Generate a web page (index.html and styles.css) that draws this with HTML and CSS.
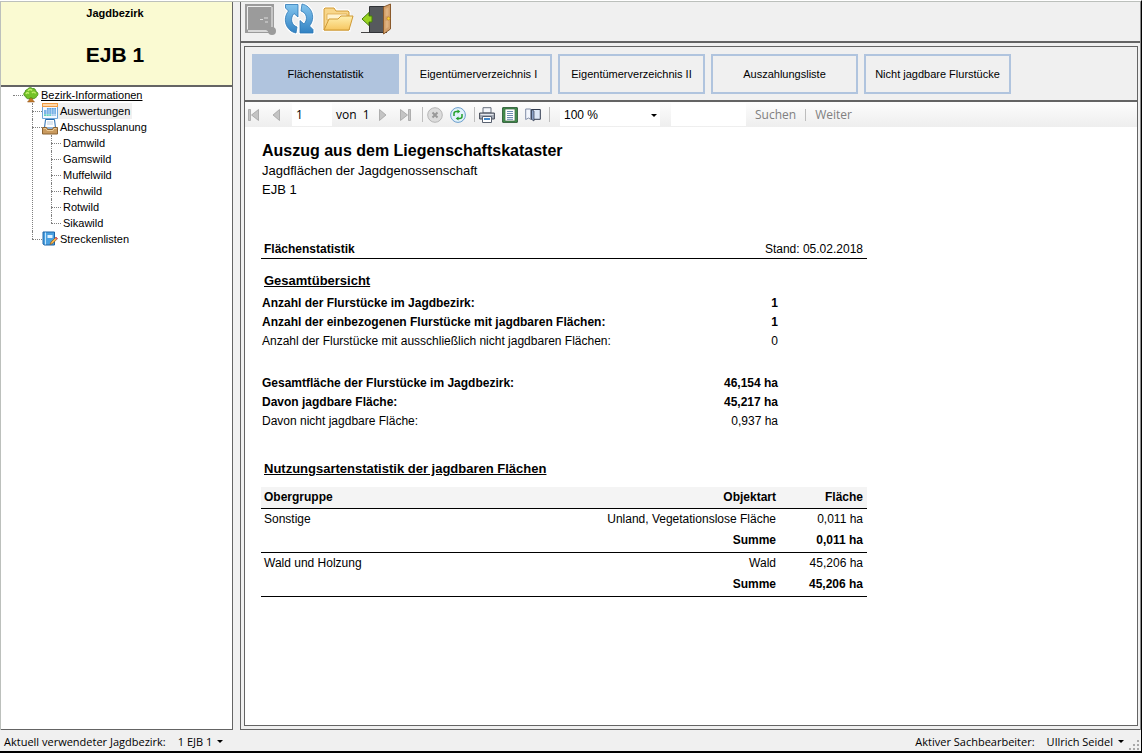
FILE: index.html
```html
<!DOCTYPE html>
<html lang="de">
<head>
<meta charset="utf-8">
<title>Jagdbezirk EJB 1</title>
<link rel="stylesheet" href="styles.css">
</head>
<body>
<div class="app">
  <div class="workspace">
    <aside class="sidebar">
      <header class="district">
        <p class="district-label">Jagdbezirk</p>
        <h1 class="district-name">EJB 1</h1>
      </header>
      <nav class="tree">
        <ul class="level level-root">
          <li class="node">
            <a class="row" href="#"><svg class="ico" viewBox="0 0 16 16"><path d="M6.500 9h3l.3 4 1.700 2h-7L6.200 13z" fill="#c47a26" stroke="#8a4a10" stroke-width=".5"/><path d="M4.500 2.500C5 .5 8 0 9.500 1.500 12 1 13 3 12.800 4.500 15.500 5 15.500 8.500 13.500 9.500 12.500 12 9.500 12 8 10.500 6 12.500 3 12 2.800 9.500.2 9 .2 5.500 2.300 5 2 3.500 3 2.500 4.500 2.500z" fill="#74c22a" stroke="#3d8510" stroke-width=".8"/><path d="M5 4c1-2 3-2 4-.5M3 7c.5-1.500 2-1.500 3-.5M9 6c1-1.500 3-1 3.500.5" fill="none" stroke="#c2ee6c" stroke-width="1.400"/></svg><span class="name root-name">Bezirk-Informationen</span></a>
            <ul class="level level-one">
              <li class="node"><a class="row" href="#" aria-current="page"><svg class="ico" viewBox="0 0 16 16"><path d="M.5 1.500h15v14H.5z" fill="#f5f9ff" stroke="#70a5d9"/><path d="M0 0h16v4H0z" fill="#f09a42"/><path d="M1 1h14v2H1z" fill="#ffd8aa"/><path d="M5 5h9v2H5zM2 7h12v4H2z" fill="#5a9fdf"/><path d="M2 11h7v2H2z" fill="#64d0bd"/><path d="M9 11h5v2H9z" fill="#a5c9ec"/><path d="M2 7h12M2 9h12M2 11h12M4.500 5v8M7 5v8M9.500 5v8M12 5v8" stroke="#e3effb" stroke-width=".5"/></svg><span class="name selected">Auswertungen</span></a></li>
              <li class="node"><a class="row" href="#"><svg class="ico" viewBox="0 0 16 16"><path d="M3.500.5h9l1 8.500h-11z" fill="#fff" stroke="#2469ae"/><path d="M5 3h6M5 5h6" stroke="#b9cde2"/><path d="M.5 8.500h4l1 2h5l1-2h4v6.500H.5z" fill="#c99a5e" stroke="#8a6232"/><path d="M1.500 9.500h2.500l1 2h6l1-2h2.500" fill="none" stroke="#ecca96"/></svg><span class="name">Abschussplanung</span></a>
                <ul class="level level-two">
                  <li class="node"><a class="row" href="#"><span class="name">Damwild</span></a></li>
                  <li class="node"><a class="row" href="#"><span class="name">Gamswild</span></a></li>
                  <li class="node"><a class="row" href="#"><span class="name">Muffelwild</span></a></li>
                  <li class="node"><a class="row" href="#"><span class="name">Rehwild</span></a></li>
                  <li class="node"><a class="row" href="#"><span class="name">Rotwild</span></a></li>
                  <li class="node"><a class="row" href="#"><span class="name">Sikawild</span></a></li>
                </ul>
              </li>
              <li class="node"><a class="row" href="#"><svg class="ico" viewBox="0 0 16 16"><path d="M1 1h11.500v13H2.500L1 13z" fill="#4aa0e0" stroke="#1c64a8"/><path d="M3.500 1.500v12" stroke="#c5e5fb"/><path d="M5.500 4h5v3h-5z" fill="#dff1ff"/><path d="M8 13.500l1-2.500 5-5 1.600 1.600-5 5z" fill="#f3b44d" stroke="#8b5a1e" stroke-width=".7"/><path d="M13 7l1-1 1.600 1.600-1 1z" fill="#e0527a"/></svg><span class="name">Streckenlisten</span></a></li>
            </ul>
          </li>
        </ul>
      </nav>
    </aside>

    <main class="main">
      <div class="toolbar">
        <button class="tool" type="button" aria-label="Vorschau" disabled><svg viewBox="0 0 32 32"><path d="M1 1h29v29H1z" fill="#9b9b9b"/><path d="M3.500 26.500v-23h24" fill="none" stroke="#eee"/><path d="M4 28h22" stroke="#eee" stroke-width="1.500"/><path d="M28 4v20" stroke="#eee"/><path d="M16 16.500h3M20 15h4M21 19h3" stroke="#ddd"/><circle cx="28" cy="28" r="4" fill="#9b9b9b"/><path d="M22 25l4 3" stroke="#9b9b9b" stroke-width="3"/></svg></button>
        <button class="tool" type="button" aria-label="Aktualisieren"><svg viewBox="0 0 32 32"><defs><linearGradient id="blue" x1="0" y1="0" x2="0" y2="1"><stop offset="0" stop-color="#84c5ee"/><stop offset="1" stop-color="#3182c3"/></linearGradient></defs><g stroke="#fff" stroke-width="3" stroke-linejoin="round"><path d="M13 30C3 28-1 16 5.500 8L2.500 5V1.500H15V14l-4-3.500C7 15 8 22 14 24z"/><path d="M19 1c10 2 14 14 7.500 22l3.500 3.500V30H17V17.500l4 3.500c4-4.500 3-11-3-13z"/></g><g fill="url(#blue)" stroke="#2c77b5" stroke-width=".8"><path d="M13 30C3 28-1 16 5.500 8L2.500 5V1.500H15V14l-4-3.500C7 15 8 22 14 24z"/><path d="M19 1c10 2 14 14 7.500 22l3.500 3.500V30H17V17.500l4 3.500c4-4.500 3-11-3-13z"/></g></svg></button>
        <button class="tool" type="button" aria-label="Öffnen"><svg viewBox="0 0 32 32"><defs><linearGradient id="gold" x1="0" y1="0" x2="0" y2="1"><stop offset="0" stop-color="#fff0b0"/><stop offset="1" stop-color="#f6c660"/></linearGradient></defs><path d="M2 27V6l1-1h9l2 3h12l1 1v18z" fill="#f8d68a" stroke="#fff" stroke-width="3"/><path d="M2 27V6l1-1h9l2 3h12l1 1v18z" fill="#f8d68a" stroke="#d09a35"/><path d="M5 11h20v6H5z" fill="#fff3cf" stroke="#d9a23f" stroke-width=".7"/><path d="M2 27l5-11h9l3-3h12l-4 14z" fill="url(#gold)" stroke="#d09a35"/></svg></button>
        <button class="tool" type="button" aria-label="Beenden"><svg viewBox="0 0 32 32"><path d="M0 29.500h26" stroke="#444"/><path d="M8.500 3.500h15v26h-15z" fill="#56595d" stroke="#303236"/><path d="M22.500 4l7-3v25l-7 5z" fill="#d39f69" stroke="#8a5a2c"/><path d="M24.500 6l3-1.500v8l-3 1zM24.500 18l3-1v7l-3 2z" fill="#dfb280"/><circle cx="27.500" cy="15.500" r="1.500" fill="#ffd33d" stroke="#b87b00" stroke-width=".5"/><path d="M1 16l7-6.500V13h3v6H8v3.500z" fill="#99d321" stroke="#457d0c"/></svg></button>
      </div>

      <section class="panel">
        <div class="tabs" role="tablist">
          <button class="tab active" type="button" role="tab" aria-selected="true">Flächenstatistik</button>
          <button class="tab" type="button" role="tab">Eigentümerverzeichnis I</button>
          <button class="tab" type="button" role="tab">Eigentümerverzeichnis II</button>
          <button class="tab" type="button" role="tab">Auszahlungsliste</button>
          <button class="tab" type="button" role="tab">Nicht jagdbare Flurstücke</button>
        </div>

        <div class="viewer-bar">
          <div class="pager">
            <button class="mini" type="button" aria-label="Erste Seite"><svg viewBox="0 0 16 16"><path d="M2.500 2.500h2v11h-2zM12.500 2.500v11L5.500 8z" fill="#c4c4c4" stroke="#9a9a9a" stroke-width=".7"/></svg></button>
            <button class="mini" type="button" aria-label="Vorherige Seite"><svg viewBox="0 0 16 16"><path d="M10.500 2.500v11L4 8z" fill="#c4c4c4" stroke="#9a9a9a" stroke-width=".7"/></svg></button>
            <input class="page-input" type="text" value="1" aria-label="Seite">
            <span class="page-total">von&nbsp; 1</span>
            <button class="mini" type="button" aria-label="Nächste Seite"><svg viewBox="0 0 16 16"><path d="M5.500 2.500v11L12 8z" fill="#c4c4c4" stroke="#9a9a9a" stroke-width=".7"/></svg></button>
            <button class="mini" type="button" aria-label="Letzte Seite"><svg viewBox="0 0 16 16"><path d="M11.500 2.500h2v11h-2zM3.500 2.500v11l7-5.500z" fill="#c4c4c4" stroke="#9a9a9a" stroke-width=".7"/></svg></button>
          </div>
          <div class="group">
            <button class="mini" type="button" aria-label="Abbrechen"><svg viewBox="0 0 16 16"><circle cx="8" cy="8" r="7.300" fill="#dcdcdc" stroke="#b5b5b5"/><path d="M5.500 5.500l5 5M10.500 5.500l-5 5" stroke="#999" stroke-width="2"/></svg></button>
            <button class="mini" type="button" aria-label="Bericht aktualisieren"><svg viewBox="0 0 16 16"><circle cx="8" cy="8" r="7.400" fill="#e2f1fc" stroke="#699dcb"/><path d="M4 9V6.500C4 5 5 4.500 6.500 4.500H8M12 7v2.500c0 1.500-1 2-2.500 2H8" fill="none" stroke="#25a12b" stroke-width="1.500"/><path d="M7.500 2.500l2.800 2-2.800 2zM8.500 9.500l-2.800 2 2.800 2z" fill="#25a12b"/></svg></button>
          </div>
          <div class="group">
            <button class="mini" type="button" aria-label="Drucken"><svg viewBox="0 0 16 16"><path d="M4 .7h8V6H4z" fill="#f4f6fa" stroke="#68707e"/><path d="M.6 6h14.800v6H.6z" fill="#a7adb8" stroke="#464c58"/><path d="M1.500 7.500h13" stroke="#e4e7ec"/><path d="M3.500 9.500h9v6h-9z" fill="#fff" stroke="#596170"/><path d="M5 12h6" stroke="#4389cc" stroke-width="2"/></svg></button>
            <button class="mini" type="button" aria-label="Seitenlayout"><svg viewBox="0 0 16 16"><path d="M.7.7h14.600v14.600H.7z" fill="#4b9b54" stroke="#1e4f29"/><path d="M3 2h10v12H3z" fill="#fff" stroke="#315f3a" stroke-width=".7"/><path d="M5 4.500h6M5 6.500h6M5 8.500h6M5 10.500h6M5 12.300h6" stroke="#5c7fa8" stroke-width=".9"/></svg></button>
            <button class="mini" type="button" aria-label="Seite einrichten"><svg viewBox="0 0 16 16"><path d="M.7 2h5v10.500l-2-1.500-3 1.500z" fill="#f2f5fc" stroke="#7f8ca5"/><path d="M6.500 2.500h8.800v9.800H6.500z" fill="#dce7f7" stroke="#333d50"/><path d="M6.500 2.500L9 4v10l-2.500-1.700z" fill="#8ba2c8" stroke="#333d50" stroke-width=".7"/></svg></button>
          </div>
          <div class="group search">
            <span class="zoom"><select class="zoom-select" aria-label="Zoom"><option>100 %</option></select><span class="caret zoom-caret"></span></span>
            <input class="find-input" type="text" aria-label="Suchtext">
            <button class="find" type="button">Suchen</button>
            <button class="find next" type="button">Weiter</button>
          </div>
        </div>

        <article class="report">
          <h2 class="report-title">Auszug aus dem Liegenschaftskataster</h2>
          <p class="report-sub">Jagdflächen der Jagdgenossenschaft</p>
          <p class="report-sub">EJB 1</p>
          <div class="report-head"><strong>Flächenstatistik</strong><span>Stand: 05.02.2018</span></div>

          <h3 class="section-title">Gesamtübersicht</h3>
          <table class="figures">
            <tbody>
              <tr class="strong"><td>Anzahl der Flurstücke im Jagdbezirk:</td><td>1</td></tr>
              <tr class="strong"><td>Anzahl der einbezogenen Flurstücke mit jagdbaren Flächen:</td><td>1</td></tr>
              <tr><td>Anzahl der Flurstücke mit ausschließlich nicht jagdbaren Flächen:</td><td>0</td></tr>
            </tbody>
          </table>
          <table class="figures areas">
            <tbody>
              <tr class="strong"><td>Gesamtfläche der Flurstücke im Jagdbezirk:</td><td>46,154 ha</td></tr>
              <tr class="strong"><td>Davon jagdbare Fläche:</td><td>45,217 ha</td></tr>
              <tr><td>Davon nicht jagdbare Fläche:</td><td>0,937 ha</td></tr>
            </tbody>
          </table>

          <h3 class="section-title usage-title">Nutzungsartenstatistik der jagdbaren Flächen</h3>
          <table class="usage">
            <thead><tr><th>Obergruppe</th><th>Objektart</th><th>Fläche</th></tr></thead>
            <tbody>
              <tr><td>Sonstige</td><td>Unland, Vegetationslose Fläche</td><td>0,011 ha</td></tr>
              <tr class="sum"><td></td><td>Summe</td><td>0,011 ha</td></tr>
              <tr><td>Wald und Holzung</td><td>Wald</td><td>45,206 ha</td></tr>
              <tr class="sum"><td></td><td>Summe</td><td>45,206 ha</td></tr>
            </tbody>
          </table>
        </article>
      </section>
    </main>
  </div>

  <footer class="status">
    <span>Aktuell verwendeter Jagdbezirk:</span>
    <button class="drop" type="button">1 EJB 1<span class="caret"></span></button>
    <span class="agent">Aktiver Sachbearbeiter:</span>
    <button class="drop" type="button">Ullrich Seidel<span class="caret"></span></button>
    <svg class="grip" viewBox="0 0 12 12"><path d="M9 1h2v2H9zM5 5h2v2H5zM9 5h2v2H9zM1 9h2v2H1zM5 9h2v2H5zM9 9h2v2H9z" fill="#a8a8a8"/></svg>
  </footer>
</div>
</body>
</html>
```
FILE: styles.css
```css
* { box-sizing: border-box; }
body { margin: 0; background: #fff; color: #000; font: 12px "Liberation Sans", Arial, sans-serif; }
h1, h2, h3, p, ul { margin: 0; padding: 0; }
ul { list-style: none; }
a { color: inherit; text-decoration: none; }
button, input, select { font: inherit; color: inherit; margin: 0; padding: 0; border: 0; border-radius: 0; background: none; }
svg { display: block; }

.app { display: flex; flex-direction: column; min-height: 100vh; background: #f0f0f0; border-top: 1px solid #fff; border-right: 1px solid #000; border-bottom: 2px solid #000; }
.workspace { flex: 1; display: flex; gap: 7px; border: 1px solid #bcc0bc; border-right-color: #888; border-bottom: 0; }

/* Sidebar */
.sidebar { width: 232px; flex: none; display: flex; flex-direction: column; background: #fff; border-right: 1px solid #646464; border-bottom: 1px solid #646464; }
.district { height: 85px; background: #fafad2; border-bottom: 2px solid #646464; text-align: center; padding: 3px 3px 0 0; }
.district-label { font: bold 11px/16px "Liberation Sans", Arial, sans-serif; }
.district-name { font-size: 21px; line-height: 24px; margin-top: 22px; }

.tree { font: 11px/16px "Liberation Sans", Arial, sans-serif; padding-left: 12px; }
.node { position: relative; }
.row { display: flex; align-items: center; height: 16px; }
.row::before { content: ""; width: 10px; border-top: 1px dotted #808080; }
.ico { width: 16px; height: 16px; }
.name { padding: 0 2px; }
.root-name { text-decoration: underline; }
.selected { background: #f0f0f0; }
.level-one, .level-two { margin-left: 19px; }
.level-one > .node::before, .level-two > .node::before { content: ""; position: absolute; left: 0; top: 0; bottom: 0; border-left: 1px dotted #808080; }
.level-one > .node:last-child::before, .level-two > .node:last-child::before { bottom: 8px; }

/* Main area */
.main { flex: 1; display: flex; flex-direction: column; min-width: 0; border-left: 1px solid #646464; border-bottom: 1px solid #646464; }
.toolbar { display: flex; gap: 7px; height: 41px; padding: 1px 3px; border-bottom: 2px solid #646464; }
.tool { width: 32px; height: 32px; }
.panel { flex: 1; display: flex; flex-direction: column; margin: 3px 2px 3px 3px; border: 1px solid #646464; background: #fff; }
.tabs { display: flex; gap: 6px; padding: 7px 7px 6px; background: #f0f0f0; border-bottom: 2px solid #646464; }
.tab { width: 147px; height: 40px; border: 2px solid #b0c4de; font: 11px/16px "Liberation Sans", Arial, sans-serif; white-space: nowrap; }
.active { background: #b0c4de; }

.viewer-bar { display: flex; align-items: center; height: 25px; padding-left: 1px; background: linear-gradient(#fdfdfd, #eee); }
.pager, .group { display: flex; align-items: center; }
.mini { width: 16px; height: 16px; flex: none; }
.pager { gap: 7px; margin-right: 1px; font: 12px/16px "Open Sans", sans-serif; }
.page-input { width: 40px; height: 23px; background: #fff; padding-left: 4px; }
.page-total { width: 34px; margin: 0 -3px; white-space: nowrap; }
.group { gap: 7px; margin-left: 8px; padding-left: 5px; position: relative; }
.group::before { content: ""; position: absolute; left: 0; height: 15px; border-left: 1px solid #bdbdbd; }
.search { gap: 11px; padding-left: 11px; }
.zoom { position: relative; display: flex; width: 100px; height: 23px; background: #fff; }
.zoom-select { width: 100%; padding-left: 4px; appearance: none; font: 12px "Liberation Sans", Arial, sans-serif; }
.caret { display: inline-block; border: 3px solid transparent; border-top-color: #000; border-bottom: 0; }
.zoom-caret { position: absolute; right: 3px; top: 11px; pointer-events: none; }
.find-input { width: 75px; height: 23px; background: #fff; }
.find { color: #808080; font: 12px/16px "Open Sans", sans-serif; margin-left: -2px; }
.next { border-left: 1px solid #bdbdbd; padding-left: 9px; line-height: 12px; }

/* Report */
.report { width: 622px; max-width: 100%; padding: 14px 0 20px 16px; }
.report-title { font-size: 16px; line-height: 20px; padding-left: 1px; }
.report-sub { font-size: 13px; line-height: 19px; padding-left: 1px; }
.report-head { display: flex; justify-content: space-between; margin-top: 42px; padding: 0 4px 0 3px; line-height: 17px; border-bottom: 1px solid #000; }
.section-title { font-size: 13px; line-height: 20px; margin-top: 12px; padding-left: 3px; text-decoration: underline; }
table { border-collapse: separate; border-spacing: 0; }
td, th { padding: 0; text-align: right; }
td:first-child, th:first-child { text-align: left; }
.figures { width: 518px; margin-top: 2px; }
.figures td { height: 19px; padding-left: 1px; padding-right: 1px; }
.areas { margin-top: 23px; }
.strong, .sum { font-weight: bold; }
.usage-title { margin-top: 29px; }
.usage { width: 100%; margin-top: 8px; }
.usage thead { background: #f4f4f4; }
.usage td, .usage th { height: 22px; padding: 0 4px 2px 3px; }
.usage .sum td { padding-bottom: 4px; }
.usage th, .sum td { border-bottom: 1px solid #000; }
.usage th:last-child { width: 87px; }

/* Status bar */
.status { display: flex; align-items: center; height: 21px; padding: 2px 1px 0 4px; font: 11px/16px "Open Sans", sans-serif; }
.status > span { white-space: nowrap; }
.drop { display: flex; align-items: center; gap: 5px; margin-left: 12px; }
.agent { margin-left: auto; }
.grip { width: 12px; height: 12px; margin-left: 4px; align-self: flex-end; }
```
